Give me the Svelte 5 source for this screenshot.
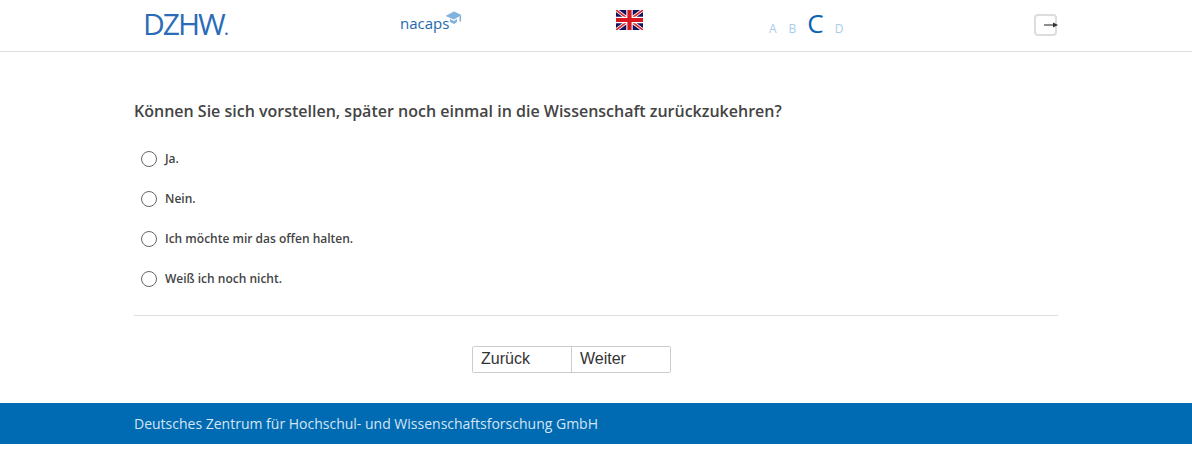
<script>
	const options = ['Ja.', 'Nein.', 'Ich möchte mir das offen halten.', 'Weiß ich noch nicht.'];
	let answer = $state(null);
</script>

<div class="page">
	<header class="topbar">
		<div class="topbar-inner">
			<div class="logo-dzhw">DZHW<span class="dot">.</span></div>
			<div class="logo-nacaps">
				<span>nacaps</span>
				<svg width="17" height="15" viewBox="0 0 17 15" aria-hidden="true">
					<path d="M0.5 5 L9 0.5 L16.5 4 L9 8.5 Z" fill="#7fb2dc" />
					<path d="M5 8 L5 11 L9 13 L12 11 L12 8 L9 10 Z" fill="#7fb2dc" />
					<rect x="14.5" y="4.5" width="1.6" height="6" fill="#7fb2dc" />
				</svg>
			</div>
			<svg class="flag" width="27" height="20" viewBox="0 0 27 20" aria-label="English">
				<rect width="27" height="20" fill="#14135f" />
				<path d="M0 0 L27 20 M27 0 L0 20" stroke="#fff" stroke-width="3.4" />
				<path d="M0 0 L27 20 M27 0 L0 20" stroke="#d8232a" stroke-width="1.6" />
				<path d="M13.5 0 V20 M0 10 H27" stroke="#fff" stroke-width="6.4" />
				<path d="M13.5 0 V20 M0 10 H27" stroke="#d8181f" stroke-width="4.2" />
			</svg>
			<div class="sizes">
				<span>A</span><span>B</span><span class="current">C</span><span>D</span>
			</div>
			<button class="logout" type="button" aria-label="Abmelden">
				<svg width="14" height="6" viewBox="0 0 14 6">
					<path d="M0 3 H10" stroke="#444" stroke-width="1.2" />
					<path d="M9 0.5 L14 3 L9 5.5 Z" fill="#333" />
				</svg>
			</button>
		</div>
	</header>

	<main class="content">
		<h1>Können Sie sich vorstellen, später noch einmal in die Wissenschaft zurückzukehren?</h1>
		<div class="options">
			{#each options as opt, i}
				<label class="option">
					<input type="radio" name="answer" value={i} bind:group={answer} />
					<span class="circle" class:on={answer === i}></span>
					<span>{opt}</span>
				</label>
			{/each}
		</div>
		<div class="nav">
			<div class="btn-group">
				<button type="button">Zurück</button>
				<button type="button">Weiter</button>
			</div>
		</div>
	</main>

	<footer class="footer">
		<div class="footer-inner">Deutsches Zentrum für Hochschul- und Wissenschaftsforschung GmbH</div>
	</footer>
</div>

<style>
	:global(body) {
		margin: 0;
		background: #fff;
		font-family: 'Open Sans', sans-serif;
	}

	.topbar {
		height: 51px;
		border-bottom: 1px solid #ddd;
	}

	.topbar-inner {
		width: 924px;
		height: 51px;
		margin: 0 auto;
		display: flex;
		align-items: flex-start;
	}

	.logo-dzhw {
		margin: 8px 0 0 9px;
		width: 86px;
		font-family: 'Open Sans', sans-serif;
		font-weight: 400;
		font-size: 30px;
		line-height: 32px;
		letter-spacing: -2px;
		color: #2b6cb8;
		white-space: nowrap;
	}

	.dot {
		font-size: 20px;
		letter-spacing: 0;
	}

	.logo-nacaps {
		margin: 10px 0 0 170px;
		width: 62px;
		display: flex;
		align-items: flex-start;
		font-size: 15px;
		line-height: 20px;
		padding: 3px 0 0 1px;
		color: #2468ad;
	}

	.logo-nacaps svg {
		margin: -2px 0 0 -4px;
		flex-shrink: 0;
	}

	.flag {
		margin: 10px 0 0 154px;
		flex-shrink: 0;
	}

	.sizes {
		margin: 7px 0 0 126px;
		display: flex;
		align-items: baseline;
		gap: 12px;
		width: 78px;
		height: 32px;
		font-size: 12px;
		color: #a9cbe8;
	}

	.sizes span {
		line-height: 32px;
	}

	.sizes .current {
		font-size: 26px;
		color: #0a64b4;
		margin: 0 -1px;
	}

	.logout {
		margin: 14px 0 0 187px;
		width: 23px;
		height: 22px;
		padding: 0 0 0 8px;
		box-sizing: border-box;
		border: 2px solid #ddd;
		border-radius: 4px;
		background: #fff;
		display: flex;
		align-items: center;
		overflow: visible;
	}

	.logout svg {
		flex-shrink: 0;
	}

	.content {
		width: 924px;
		margin: 0 auto;
	}

	h1 {
		margin: 0;
		padding-top: 48px;
		font-size: 16px;
		line-height: 22px;
		font-weight: 600;
		color: #444;
	}

	.options {
		margin-top: 16px;
		padding: 0 0 17px 7px;
		border-bottom: 1px solid #ddd;
	}

	.option {
		display: flex;
		align-items: center;
		gap: 8px;
		height: 40px;
		font-size: 12px;
		font-weight: 600;
		color: #444;
		cursor: pointer;
	}

	.option input {
		position: absolute;
		opacity: 0;
		width: 0;
		height: 0;
	}

	.circle {
		width: 16px;
		height: 16px;
		margin-top: 1px;
		box-sizing: border-box;
		border: 1px solid #666;
		border-radius: 50%;
		background: #fff;
		flex-shrink: 0;
	}

	.circle.on {
		background: radial-gradient(circle, #0a64b4 0 4px, #fff 5px);
	}

	.nav {
		padding: 30px 0 30px 338px;
	}

	.btn-group {
		display: flex;
		width: 199px;
		height: 27px;
		box-sizing: border-box;
		border: 1px solid #ccc;
		border-radius: 2px;
	}

	.btn-group button {
		flex: 1;
		padding: 0 0 2px 8px;
		border: 0;
		background: #fff;
		font-family: 'Liberation Sans', Arial, sans-serif;
		font-size: 16px;
		line-height: 23px;
		color: #333;
		text-align: left;
		cursor: pointer;
	}

	.btn-group button + button {
		border-left: 1px solid #ccc;
	}

	.footer {
		background: #006ab3;
		height: 41px;
		margin-bottom: 9px;
	}

	.footer-inner {
		width: 924px;
		margin: 0 auto;
		font-size: 14px;
		line-height: 41px;
		color: #d5e5f3;
	}
</style>
